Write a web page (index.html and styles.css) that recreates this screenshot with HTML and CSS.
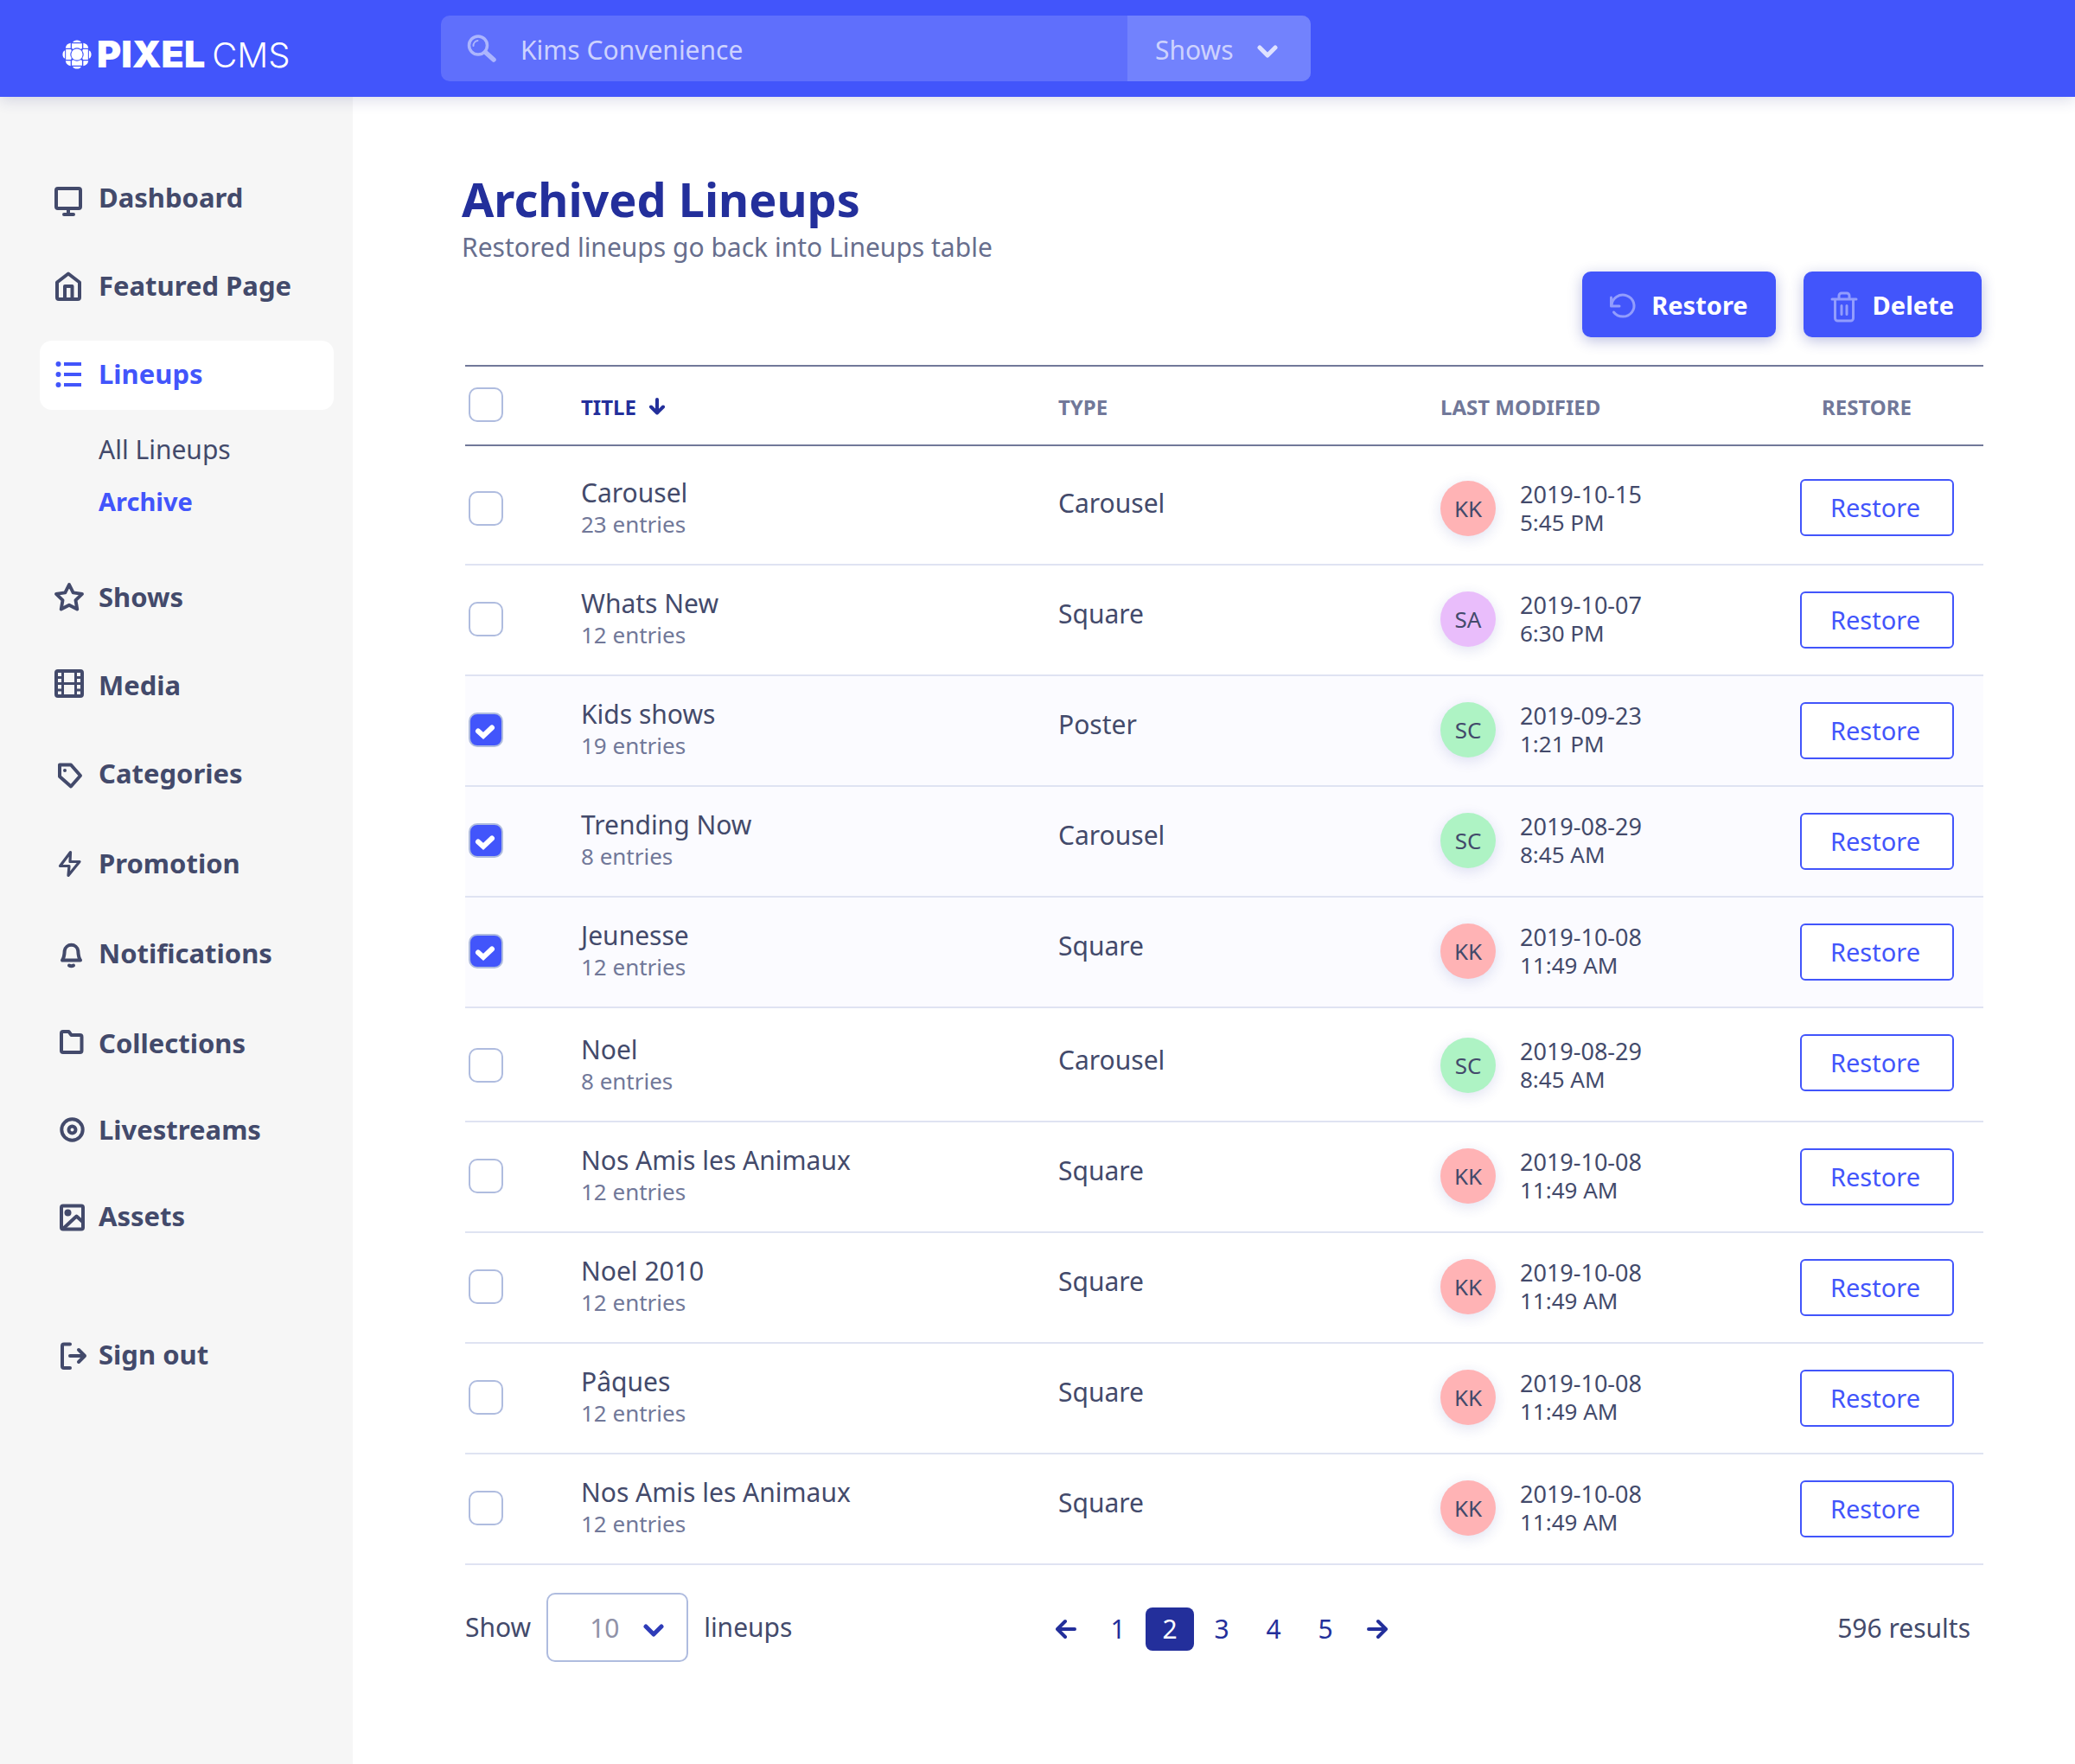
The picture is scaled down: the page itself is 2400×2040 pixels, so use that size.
FILE: index.html
```html
<!DOCTYPE html>
<html lang="en">
<head>
<meta charset="utf-8">
<meta name="viewport" content="width=device-width, initial-scale=1">
<title>Archived Lineups – Pixel CMS</title>
<link rel="stylesheet" href="styles.css">
</head>
<body>
<header class="topbar">
  <a class="brand" href="#">
    <svg class="brand-mark" viewBox="0 0 98 98" aria-hidden="true">
      <defs><g id="petal"><path d="M35 9A15 12 0 0 1 63 9Z"/><path d="M32 12H66V29L61.500 31A22 22 0 0 0 36.500 31L32 29Z"/><path d="M28 28H11A20 20 0 0 1 28 11Z"/></g></defs>
      <circle cx="49" cy="49" r="19"/>
      <use href="#petal"/><use href="#petal" transform="rotate(90 49 49)"/><use href="#petal" transform="rotate(180 49 49)"/><use href="#petal" transform="rotate(270 49 49)"/>
    </svg>
    <span class="brand-name"><strong>PIXEL</strong><span>CMS</span></span>
  </a>
  <form class="search" role="search">
    <label class="search-field">
      <svg class="search-icon" viewBox="0 0 34 32" aria-hidden="true"><circle cx="13" cy="12.500" r="10.500" stroke-width="3.500"/><path d="M7.500 13a6 6 0 0 1 5-6" stroke-width="2"/><path d="M21.500 20.500 31 29" stroke-width="5.500"/></svg>
      <input type="search" aria-label="Search" value="Kims Convenience">
    </label>
    <div class="search-scope">
      <select aria-label="Search in"><option>Shows</option><option>Media</option></select>
      <svg class="chevron" viewBox="0 0 24 16" aria-hidden="true"><path d="M3 3l9 9 9-9"/></svg>
    </div>
  </form>
</header>

<div class="layout">
  <nav class="sidebar" aria-label="Main">
    <ul class="nav-group">
      <li><a class="nav-link" href="#"><svg class="nav-icon" viewBox="0 0 34 34" aria-hidden="true"><rect x="3" y="7" width="28" height="23" rx="2"/><path d="M17 31v5M12 37h11"/></svg>Dashboard</a></li>
      <li><a class="nav-link" href="#"><svg class="nav-icon" viewBox="0 0 34 34" aria-hidden="true"><path d="M17 3.500 30 13.500V31a2 2 0 0 1-2 2H6a2 2 0 0 1-2-2V13.500Z"/><path d="M13 32V18h8.500v14"/></svg>Featured Page</a></li>
      <li>
        <a class="nav-link nav-link-active" href="#"><svg class="nav-icon" viewBox="0 0 34 34" aria-hidden="true"><path d="M12 6h20M12 18h20M12 30h20" stroke-linecap="butt"/><g fill="currentColor" stroke="none"><circle cx="5.500" cy="6" r="3"/><circle cx="5.500" cy="18" r="3"/><circle cx="5.500" cy="30" r="3"/></g></svg>Lineups</a>
        <ul class="subnav">
          <li><a href="#">All Lineups</a></li>
          <li><a class="subnav-active" href="#" aria-current="page">Archive</a></li>
        </ul>
      </li>
    </ul>
    <ul class="nav-group nav-group-content">
      <li><a class="nav-link" href="#"><svg class="nav-icon" viewBox="0 0 34 34" aria-hidden="true"><path transform="scale(1.500)" stroke-width="2.600" d="M12 2l3.090 6.260L22 9.270l-5 4.870 1.180 6.880L12 17.770l-6.180 3.250L7 14.140 2 9.270l6.910-1.010Z"/></svg>Shows</a></li>
      <li><a class="nav-link" href="#"><svg class="nav-icon" viewBox="0 0 34 34" aria-hidden="true"><rect x="3" y="1" width="30" height="29" rx="2"/><path stroke-width="3" d="M10.500 1v29M25.500 1v29M3 15.500h30M3 8.500h7.500M3 23h7.500M25.500 8.500H33M25.500 23H33"/></svg>Media</a></li>
      <li><a class="nav-link" href="#"><svg class="nav-icon" viewBox="0 0 34 34" aria-hidden="true"><path d="M7 7.500H20L31 20 20 32.500 7 21Z"/><circle cx="13" cy="14" r="2" fill="currentColor" stroke="none"/></svg>Categories</a></li>
    </ul>
    <ul class="nav-group nav-group-loose">
      <li><a class="nav-link" href="#"><svg class="nav-icon" viewBox="0 0 34 34" aria-hidden="true"><path stroke-width="3.200" d="M19.500 4.500 7.500 20.500H18L17 31.500 30 15.500H19Z"/></svg>Promotion</a></li>
      <li><a class="nav-link" href="#"><svg class="nav-icon" viewBox="0 0 34 34" aria-hidden="true"><path d="M10 25.500H31C28.500 22 28.500 18 28.300 14.500A7.900 7.900 0 0 0 12.700 14.500C12.500 18 12.500 22 10 25.500Z"/><path d="M18 31.500a3.500 2 0 0 0 5 0"/></svg>Notifications</a></li>
      <li><a class="nav-link" href="#"><svg class="nav-icon" viewBox="0 0 34 34" aria-hidden="true"><path d="M9 6a2 2 0 0 1 2-2h6.500l3 4h10a2 2 0 0 1 2 2V26a2 2 0 0 1-2 2H11a2 2 0 0 1-2-2Z"/></svg>Collections</a></li>
    </ul>
    <ul class="nav-group nav-group-tight">
      <li><a class="nav-link" href="#"><svg class="nav-icon" viewBox="0 0 34 34" aria-hidden="true"><circle cx="21.500" cy="17.500" r="12.200"/><circle cx="21.500" cy="17.500" r="4"/></svg>Livestreams</a></li>
      <li><a class="nav-link" href="#"><svg class="nav-icon" viewBox="0 0 34 34" aria-hidden="true"><rect x="9" y="5.500" width="25" height="27" rx="2"/><path d="M12 31 26.500 17.500 33 23.500"/><circle cx="16.500" cy="13.500" r="4" fill="currentColor" stroke="none"/></svg>Assets</a></li>
    </ul>
    <ul class="nav-group nav-group-session">
      <li><a class="nav-link" href="#"><svg class="nav-icon" viewBox="0 0 34 34" aria-hidden="true"><path d="M19 5.500H12a2 2 0 0 0-2 2V31a2 2 0 0 0 2 2h7M19 19H35M29 12l7 7-7 7"/></svg>Sign out</a></li>
    </ul>
  </nav>

  <main class="content">
    <h1>Archived Lineups</h1>
    <p class="subtitle">Restored lineups go back into Lineups table</p>
    <div class="actions">
      <button class="btn-primary" type="button"><svg class="btn-icon" viewBox="0 0 30 34" aria-hidden="true"><path d="M1.500 6v10h9.500M2 15A13 12.500 0 1 1 4.500 23"/></svg>Restore</button>
      <button class="btn-primary" type="button"><svg class="btn-icon" viewBox="0 0 30 34" aria-hidden="true"><path d="M1 8h28M9 7V4a3 3 0 0 1 3-3h6a3 3 0 0 1 3 3v3M4.500 8v22a3 3 0 0 0 3 3h15a3 3 0 0 0 3-3V8M12 15.500v10M18 15.500v10"/></svg>Delete</button>
    </div>

    <div class="listing">
    <table class="lineups">
      <colgroup><col class="col-check"><col class="col-title"><col class="col-type"><col class="col-modified"><col class="col-restore"></colgroup>
      <thead>
        <tr>
          <th class="cell-check"><input type="checkbox" aria-label="Select all lineups"></th>
          <th class="sorted" aria-sort="descending">TITLE <svg class="sort-icon" viewBox="0 0 20 20" aria-hidden="true"><path d="M10 2v15M3 10.500l7 7 7-7"/></svg></th>
          <th>TYPE</th>
          <th>LAST MODIFIED</th>
          <th class="head-restore">RESTORE</th>
        </tr>
      </thead>
      <tbody>
        <tr class="row-first">
          <td class="cell-check"><input type="checkbox" aria-label="Select Carousel"></td>
          <td class="cell-title"><div class="name">Carousel</div><div class="entries">23 entries</div></td>
          <td class="cell-type">Carousel</td>
          <td class="cell-modified"><div class="modified"><span class="avatar avatar-kk">KK</span><div><div class="date">2019-10-15</div>5:45 PM</div></div></td>
          <td class="cell-restore"><button class="btn-outline" type="button">Restore</button></td>
        </tr>
        <tr>
          <td class="cell-check"><input type="checkbox" aria-label="Select Whats New"></td>
          <td class="cell-title"><div class="name">Whats New</div><div class="entries">12 entries</div></td>
          <td class="cell-type">Square</td>
          <td class="cell-modified"><div class="modified"><span class="avatar avatar-sa">SA</span><div><div class="date">2019-10-07</div>6:30 PM</div></div></td>
          <td class="cell-restore"><button class="btn-outline" type="button">Restore</button></td>
        </tr>
        <tr class="selected">
          <td class="cell-check"><input type="checkbox" checked aria-label="Select Kids shows"></td>
          <td class="cell-title"><div class="name">Kids shows</div><div class="entries">19 entries</div></td>
          <td class="cell-type">Poster</td>
          <td class="cell-modified"><div class="modified"><span class="avatar avatar-sc">SC</span><div><div class="date">2019-09-23</div>1:21 PM</div></div></td>
          <td class="cell-restore"><button class="btn-outline" type="button">Restore</button></td>
        </tr>
        <tr class="selected">
          <td class="cell-check"><input type="checkbox" checked aria-label="Select Trending Now"></td>
          <td class="cell-title"><div class="name">Trending Now</div><div class="entries">8 entries</div></td>
          <td class="cell-type">Carousel</td>
          <td class="cell-modified"><div class="modified"><span class="avatar avatar-sc">SC</span><div><div class="date">2019-08-29</div>8:45 AM</div></div></td>
          <td class="cell-restore"><button class="btn-outline" type="button">Restore</button></td>
        </tr>
        <tr class="selected">
          <td class="cell-check"><input type="checkbox" checked aria-label="Select Jeunesse"></td>
          <td class="cell-title"><div class="name">Jeunesse</div><div class="entries">12 entries</div></td>
          <td class="cell-type">Square</td>
          <td class="cell-modified"><div class="modified"><span class="avatar avatar-kk">KK</span><div><div class="date">2019-10-08</div>11:49 AM</div></div></td>
          <td class="cell-restore"><button class="btn-outline" type="button">Restore</button></td>
        </tr>
        <tr class="row-after-selection">
          <td class="cell-check"><input type="checkbox" aria-label="Select Noel"></td>
          <td class="cell-title"><div class="name">Noel</div><div class="entries">8 entries</div></td>
          <td class="cell-type">Carousel</td>
          <td class="cell-modified"><div class="modified"><span class="avatar avatar-sc">SC</span><div><div class="date">2019-08-29</div>8:45 AM</div></div></td>
          <td class="cell-restore"><button class="btn-outline" type="button">Restore</button></td>
        </tr>
        <tr>
          <td class="cell-check"><input type="checkbox" aria-label="Select Nos Amis les Animaux"></td>
          <td class="cell-title"><div class="name">Nos Amis les Animaux</div><div class="entries">12 entries</div></td>
          <td class="cell-type">Square</td>
          <td class="cell-modified"><div class="modified"><span class="avatar avatar-kk">KK</span><div><div class="date">2019-10-08</div>11:49 AM</div></div></td>
          <td class="cell-restore"><button class="btn-outline" type="button">Restore</button></td>
        </tr>
        <tr>
          <td class="cell-check"><input type="checkbox" aria-label="Select Noel 2010"></td>
          <td class="cell-title"><div class="name">Noel 2010</div><div class="entries">12 entries</div></td>
          <td class="cell-type">Square</td>
          <td class="cell-modified"><div class="modified"><span class="avatar avatar-kk">KK</span><div><div class="date">2019-10-08</div>11:49 AM</div></div></td>
          <td class="cell-restore"><button class="btn-outline" type="button">Restore</button></td>
        </tr>
        <tr>
          <td class="cell-check"><input type="checkbox" aria-label="Select Pâques"></td>
          <td class="cell-title"><div class="name">Pâques</div><div class="entries">12 entries</div></td>
          <td class="cell-type">Square</td>
          <td class="cell-modified"><div class="modified"><span class="avatar avatar-kk">KK</span><div><div class="date">2019-10-08</div>11:49 AM</div></div></td>
          <td class="cell-restore"><button class="btn-outline" type="button">Restore</button></td>
        </tr>
        <tr>
          <td class="cell-check"><input type="checkbox" aria-label="Select Nos Amis les Animaux"></td>
          <td class="cell-title"><div class="name">Nos Amis les Animaux</div><div class="entries">12 entries</div></td>
          <td class="cell-type">Square</td>
          <td class="cell-modified"><div class="modified"><span class="avatar avatar-kk">KK</span><div><div class="date">2019-10-08</div>11:49 AM</div></div></td>
          <td class="cell-restore"><button class="btn-outline" type="button">Restore</button></td>
        </tr>
      </tbody>
    </table>

    <div class="table-footer">
      <div class="page-size">
        <label for="page-size">Show</label>
        <div class="page-size-box">
          <select id="page-size"><option>10</option><option>25</option><option>50</option></select>
          <svg class="chevron" viewBox="0 0 24 16" aria-hidden="true"><path d="M3 3l9 9 9-9"/></svg>
        </div>
        <span>lineups</span>
      </div>
      <nav class="pagination" aria-label="Pages">
        <a href="#" aria-label="Previous page"><svg class="arrow" viewBox="0 0 24 24" aria-hidden="true"><path d="M22 12H3M11 3l-9 9 9 9"/></svg></a>
        <a href="#">1</a>
        <a class="current" href="#" aria-current="page">2</a>
        <a href="#">3</a>
        <a href="#">4</a>
        <a href="#">5</a>
        <a href="#" aria-label="Next page"><svg class="arrow" viewBox="0 0 24 24" aria-hidden="true"><path d="M2 12h19M13 3l9 9-9 9"/></svg></a>
      </nav>
      <div class="results">596 results</div>
    </div>
    </div>
  </main>
</div>
</body>
</html>
```
FILE: styles.css
```css
:root {
  --blue: #4255fb;
  --navy: #232f9b;
  --ink: #434a6b;
  --muted: #717899;
  --line: #dfe3f2;
  --control: #afbcdf;
}

* { box-sizing: border-box; }

body {
  margin: 0;
  min-height: 100vh;
  display: flex;
  flex-direction: column;
  background: #fff;
  color: var(--ink);
  font: 30px/36px "Noto Sans", "Open Sans", sans-serif;
}

a { color: inherit; text-decoration: none; }
ul { list-style: none; margin: 0; padding: 0; }
button, input, select { font: inherit; }
svg { display: block; flex: none; fill: none; stroke: currentColor; stroke-linecap: round; stroke-linejoin: round; }

/* Top bar */
.topbar {
  position: relative;
  z-index: 1;
  display: flex;
  align-items: center;
  height: 112px;
  background: var(--blue);
  box-shadow: 0 4px 16px rgba(35, 43, 120, .16);
}
.brand {
  flex: 0 0 510px;
  display: flex;
  align-items: center;
  gap: 6px;
  padding: 14px 0 0 72px;
  color: #fff;
}
.brand-mark { width: 34px; height: 34px; fill: #fff; stroke: none; }
.brand-name {
  display: flex;
  align-items: baseline;
  gap: 8px;
  font: 300 40px/44px Inter, "Liberation Sans", sans-serif;
}
.brand-name strong { font-size: 43px; font-weight: 900; }
.search {
  flex: 0 1 1006px;
  display: flex;
  height: 76px;
  border-radius: 10px;
  overflow: hidden;
  background: #5f6ffc;
  color: #cdd2fe;
}
.search-field { flex: 1; display: flex; align-items: center; gap: 28px; padding-left: 30px; }
.search-icon { width: 34px; height: 32px; color: #acb5fd; }
.search input {
  flex: 1;
  min-width: 0;
  height: 76px;
  padding: 2px 0 0;
  border: 0;
  outline: 0;
  appearance: none;
  background: none;
  color: inherit;
}
.search-scope { position: relative; flex: 0 0 212px; background: #7282fd; }
.search-scope select, .page-size select {
  width: 100%;
  height: 100%;
  border: 0;
  appearance: none;
  background: none;
  color: inherit;
}
.search-scope select { padding: 4px 0 0 32px; }
.chevron { width: 24px; height: 16px; stroke-width: 5; pointer-events: none; }
.search-scope .chevron { position: absolute; right: 38px; top: 34px; color: #dfe2ff; }

/* Sidebar */
.layout { flex: 1; display: flex; }
.sidebar {
  flex: 0 0 408px;
  padding: 78px 22px 40px 46px;
  background: #f6f6f6;
}
.nav-group { display: grid; gap: 22px; }
.nav-group-content { margin-top: 42px; }
.nav-group-loose { gap: 24px; margin-top: 24px; }
.nav-group-tight { gap: 20px; margin-top: 20px; }
.nav-group-session { margin-top: 80px; }
.nav-link {
  display: flex;
  align-items: center;
  gap: 18px;
  height: 80px;
  padding: 0 16px 4px;
  border-radius: 14px;
  font-size: 31px;
  font-weight: 700;
}
.nav-link-active { background: #fff; color: var(--blue); }
.nav-icon { width: 34px; height: 34px; overflow: visible; stroke-width: 4; }
.subnav { padding: 16px 0 0 68px; line-height: 60px; }
.subnav a { display: block; }
.subnav-active { color: var(--blue); font-size: 29px; font-weight: 700; }

/* Page heading */
.content { flex: 1; min-width: 0; padding: 86px 106px 80px 126px; }
h1 { margin: 0 0 4px; color: var(--navy); font-size: 54px; line-height: 64px; }
.subtitle { margin: 0; color: #676e8d; line-height: 40px; }
.actions { display: flex; justify-content: flex-end; gap: 32px; margin: 8px 2px 32px 0; }
.btn-primary {
  display: flex;
  align-items: center;
  gap: 18px;
  height: 76px;
  padding: 2px 32px 0;
  border: 0;
  border-radius: 10px;
  background: var(--blue);
  color: #fff;
  font-size: 29px;
  font-weight: 700;
  box-shadow: 0 4px 16px rgba(35, 47, 155, .3);
}
.btn-icon { width: 30px; height: 34px; margin-top: 4px; overflow: visible; color: #929dfd; stroke-width: 3; }

/* Lineups table */
.listing { padding-left: 4px; }
.lineups { width: 100%; table-layout: fixed; border-collapse: separate; border-spacing: 0; }
.col-check { width: 134px; }
.col-title { width: 552px; }
.col-type { width: 442px; }
.col-modified { width: 416px; }
.col-restore { width: 212px; }
th {
  height: 94px;
  padding: 31px 0 0;
  border-top: 2px solid var(--muted);
  border-bottom: 2px solid var(--muted);
  color: var(--muted);
  font-size: 24px;
  line-height: 32px;
  text-align: left;
  vertical-align: top;
}
th.cell-check { padding: 24px 0 0 4px; }
th.head-restore { padding-left: 25px; }
th.sorted { color: var(--navy); }
.sort-icon { display: inline-block; width: 20px; height: 20px; margin-left: 8px; stroke-width: 4; }
td { --extra: 0px; padding: 0; border-bottom: 2px solid var(--line); vertical-align: top; }
.row-first td { --extra: 10px; }
.row-after-selection td { --extra: 4px; }
.row-first td.cell-restore { --extra: 8px; }
.row-after-selection td.cell-restore { --extra: 0px; }
td.cell-check { padding: calc(42px + var(--extra)) 0 0 4px; }
td.cell-title { padding: calc(26px + var(--extra)) 0 28px; }
td.cell-type { padding-top: calc(38px + var(--extra)); }
td.cell-modified, td.cell-restore { padding-top: calc(30px + var(--extra)); }
.selected td { background: #fbfbff; }
.entries { color: var(--muted); font-size: 26px; }
.modified { display: flex; align-items: center; gap: 28px; font-size: 26px; line-height: 32px; }
.date { font-size: 27px; }
.avatar {
  display: grid;
  place-items: center;
  width: 64px;
  height: 64px;
  border-radius: 50%;
  font-size: 26px;
  box-shadow: 0 4px 16px rgba(35, 47, 155, .14);
}
.avatar-kk { background: #ffb3b5; }
.avatar-sa { background: #e9bdfb; }
.avatar-sc { background: #aef3c4; }
.btn-outline {
  width: 178px;
  height: 66px;
  padding: 0 4px 0 0;
  border: 2px solid var(--blue);
  border-radius: 6px;
  background: #fff;
  color: var(--blue);
  font-size: 29px;
}
input[type="checkbox"] {
  display: block;
  width: 40px;
  height: 40px;
  margin: 0;
  border: 2px solid var(--control);
  border-radius: 10px;
  appearance: none;
  background: #fff center / 36px no-repeat;
}
input[type="checkbox"]:checked {
  background-color: var(--blue);
  background-image: url("data:image/svg+xml,%3Csvg xmlns='http://www.w3.org/2000/svg' viewBox='0 0 36 36'%3E%3Cpath d='M9 19.500l6 5.500 10-9.500' fill='none' stroke='white' stroke-width='6' stroke-linecap='round'/%3E%3C/svg%3E");
}

/* Table footer */
.table-footer {
  display: grid;
  grid-template-columns: 1fr auto 1fr;
  align-items: center;
  padding: 32px 6px 0 0;
}
.page-size { display: flex; align-items: center; gap: 18px; }
.page-size-box {
  position: relative;
  width: 164px;
  height: 80px;
  border: 2px solid var(--control);
  border-radius: 10px;
  color: #9092a8;
}
.page-size select { padding: 2px 0 0 48px; }
.page-size .chevron { position: absolute; right: 26px; top: 34px; color: #2e3cb8; }
.pagination { display: flex; align-items: center; gap: 4px; padding-top: 4px; color: var(--navy); }
.pagination a { display: grid; place-items: center; width: 56px; height: 50px; border-radius: 8px; }
.pagination .current { background: var(--navy); color: #fff; }
.arrow { width: 24px; height: 24px; stroke-width: 4; }
.results { padding: 2px 9px 0 0; text-align: right; }
```
